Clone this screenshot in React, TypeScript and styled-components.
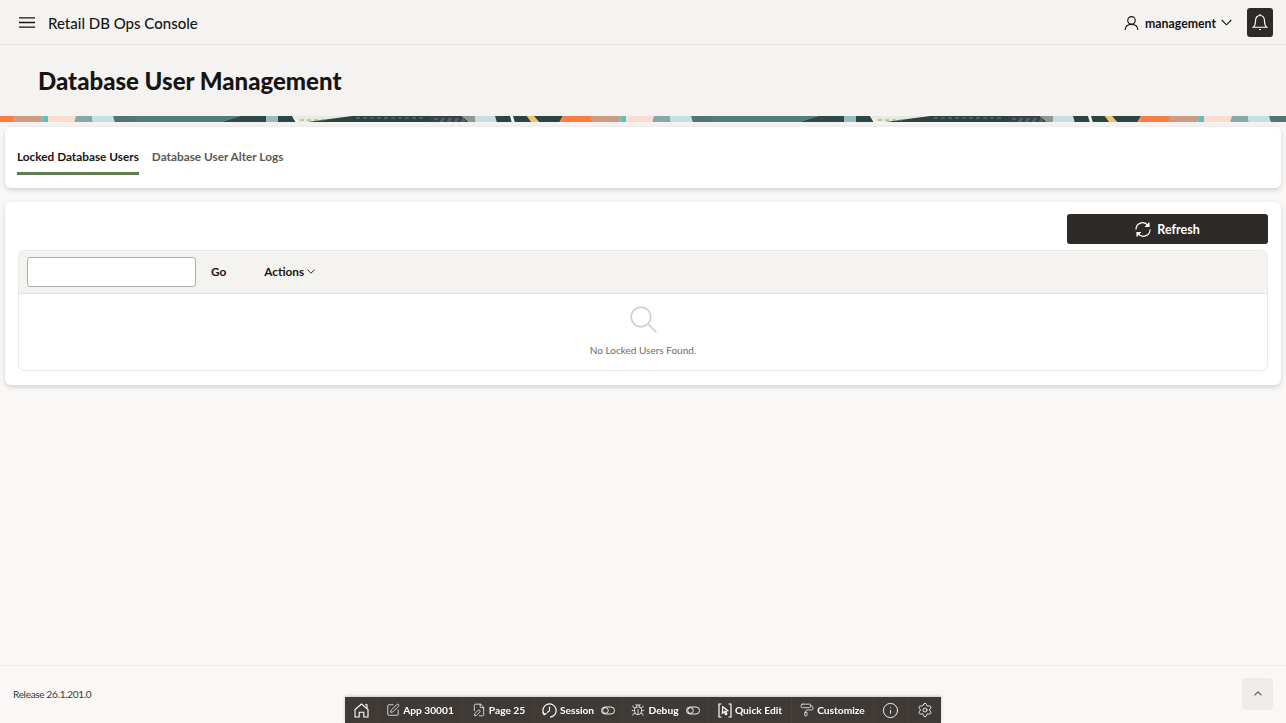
import React from "react";
import styled, { createGlobalStyle } from "styled-components";
import { Bug, FilePen, Info, PaintRoller, Settings, SquarePen } from "lucide-react";

const Global = createGlobalStyle`
  html, body { margin: 0; padding: 0; height: 100%; overflow: hidden; }
  body { background: #f9f8f6; font-family: Lato, "Noto Sans", "Liberation Sans", sans-serif; color: #161513; }
  * { box-sizing: border-box; }
`;

const Page = styled.div`
  height: 723px;
  display: flex;
  flex-direction: column;
`;
const Header = styled.header`
  height: 45px;
  flex: none;
  background: #f5f3f1;
  border-bottom: 1px solid #e6e4e1;
  display: flex;
  align-items: center;
  padding: 1px 13px 0 19px;
`;
const AppName = styled.div`
  font-size: 15px;
  font-weight: 500;
  margin-left: 13px;
  flex: 1;
`;
const UserName = styled.span`
  font-size: 12.3px;
  font-weight: 700;
  margin: 1px 5px 0 6px;
`;
const BellButton = styled.div`
  width: 26px;
  height: 29px;
  background: #2d2a27;
  border-radius: 3px;
  margin-left: 15px;
  display: flex;
  align-items: center;
  justify-content: center;
`;
const Hero = styled.div`
  flex: none;
  background: #f5f3f1;
  height: 71px;
  padding: 1px 0 0 38px;
  display: flex;
  align-items: center;
`;
const Title = styled.h1`
  margin: 0;
  font-size: 24px;
  font-weight: 900;
  line-height: 32px;
`;
const Banner = styled.svg`
  display: block;
  flex: none;
  width: 100%;
  height: 6px;
`;
const BannerGap = styled.div`
  flex: none;
  height: 5px;
  background: #f5f3f1;
`;
const Main = styled.main`
  flex: 1;
  display: flex;
  flex-direction: column;
  gap: 14px;
  padding: 0 5px;
`;
const Card = styled.section`
  background: #fff;
  border-radius: 6px;
  box-shadow: 0 2px 5px rgba(0, 0, 0, 0.16);
`;
const TabBar = styled(Card)`
  height: 61px;
  padding: 0 12px;
  display: flex;
  gap: 13px;
`;
const Tab = styled.div<{ $active?: boolean }>`
  height: 48px;
  padding-top: 21px;
  font-size: 11.8px;
  line-height: 18px;
  font-weight: 700;
  color: ${(p) => (p.$active ? "#161513" : "#5c5854")};
  border-bottom: 3px solid ${(p) => (p.$active ? "#5f7d4f" : "transparent")};
`;
const ReportCard = styled(Card)`
  height: 183px;
  padding: 12px 13px 14px;
`;
const ButtonRow = styled.div`
  display: flex;
  justify-content: flex-end;
  margin-bottom: 6px;
`;
const RefreshButton = styled.div`
  width: 201px;
  height: 30px;
  background: #2d2a27;
  border-radius: 3px;
  color: #fff;
  font-size: 12.5px;
  font-weight: 700;
  display: flex;
  align-items: center;
  justify-content: center;
  gap: 6px;
`;
const Report = styled.div`
  height: 121px;
  border: 1px solid #ebe9e6;
  border-radius: 6px;
  overflow: hidden;
`;
const ReportBar = styled.div`
  height: 43px;
  background: #f5f3f0;
  border: 0 solid #e6e4e1;
  border-bottom-width: 1px;
  display: flex;
  align-items: center;
  padding: 0 8px;
`;
const SearchInput = styled.input`
  width: 169px;
  height: 30px;
  background: #fff;
  border: 1px solid #b2afab;
  border-radius: 3px;
`;
const BarAction = styled.div<{ $gap: number }>`
  font-size: 11.8px;
  font-weight: 700;
  margin: -1px 0 0 ${(p) => p.$gap}px;
  display: flex;
  align-items: center;
  gap: 3px;
`;
const Empty = styled.div`
  display: flex;
  flex-direction: column;
  align-items: center;
  padding-top: 12px;
  gap: 10px;
`;
const EmptyText = styled.div`
  font-size: 10px;
  line-height: 14px;
  color: #6f6b66;
`;
const Footer = styled.footer`
  height: 58px;
  flex: none;
  border-top: 1px solid #eeece9;
  display: flex;
  align-items: center;
  justify-content: space-between;
  padding: 0 13px 2px;
  font-size: 10px;
  letter-spacing: -0.3px;
  color: #3a3733;
`;
const TopButton = styled.div`
  width: 31px;
  height: 32px;
  background: #efedeb;
  border-radius: 4px;
  display: flex;
  align-items: center;
  justify-content: center;
`;
const DevBar = styled.div`
  position: fixed;
  left: 345px;
  bottom: 0;
  width: 596px;
  height: 26px;
  background: #3f3a36;
  display: flex;
  align-items: stretch;
  box-shadow: 0 -1px 3px rgba(0, 0, 0, 0.2);
`;
const DevItem = styled.div<{ $w: number }>`
  width: ${(p) => p.$w}px;
  flex: none;
  color: #fff;
  font-size: 10.2px;
  font-weight: 700;
  display: flex;
  align-items: center;
  justify-content: center;
  gap: 3px;
  border-right: 1px solid #47423e;
  &:last-child { border-right: 0; }
`;

const dev = { size: 14, strokeWidth: 1.3, color: "#fff" };

const Toggle = () => (
  <svg width="14" height="9" viewBox="0 0 14 9" fill="none" stroke="#fff" strokeWidth="0.9" style={{ marginLeft: 4 }}>
    <rect x="0.5" y="1" width="13" height="7" rx="3.5" />
    <circle cx="4.500" cy="4.500" r="2.800" />
  </svg>
);

const segments: [string, string][] = [
  ["#fb7c45", "0,0 15,0 13,7 0,7"],
  ["#cb9c82", "13,0 43,0 41,7 13,7"],
  ["#5cc2bb", "43,0 50,0 48,7 41,7"],
  ["#fddccf", "48,0 76,0 74,7 48,7"],
  ["#86a9a8", "76,0 92,0 93,7 74,7"],
  ["#c3e0e3", "92,0 113,0 115,7 93,7"],
  ["#4f7670", "113,0 135,0 135,7 115,7"],
  ["#4f7f7c", "135,0 240,0 218,7 135,7"],
  ["#2f4a46", "240,0 266,0 266,7 218,7"],
  ["#97bcc0", "266,0 278,0 278,7 266,7"],
  ["#2b4541", "278,0 292,0 296,7 278,7"],
  ["#e3ecd8", "292,0 352,0 344,4 300,7"],
  ["#2d4240", "352,0 430,0 430,7 300,7"],
  ["#33454a", "430,0 462,0 470,7 430,7"],
  ["#8a9a92", "462,0 475,0 475,7 470,7"],
  ["#c5dfe3", "475,0 495,0 497,7 475,7"],
  ["#2c4441", "495,0 510,0 512,7 497,7"],
  ["#2c4441", "513,0 527,0 532,7 515,7"],
  ["#f0c663", "527,0 534,0 540,7 532,7"],
  ["#2c4441", "534,0 563,0 559,7 540,7"],
  ["#fb7c45", "563,0 578,0 578,7 559,7"],
];

export default function App() {
  return (
    <Page>
      <Global />
      <Header>
        <svg width="16" height="11" viewBox="0 0 16 11" stroke="#161513" strokeWidth="1.3">
          <path d="M0 .8h16M0 5.500h16M0 10.200h16" />
        </svg>
        <AppName>Retail DB Ops Console</AppName>
        <svg width="15" height="16" viewBox="0 0 16 16" fill="none" stroke="#161513" strokeWidth="1.2">
          <circle cx="8" cy="5.200" r="4" />
          <path d="M1.200 15.500c.3-3.600 3-6 6.800-6s6.500 2.400 6.800 6" />
        </svg>
        <UserName>management</UserName>
        <svg width="11" height="7" viewBox="0 0 11 7" fill="none" stroke="#161513" strokeWidth="1.100">
          <path d="M.7 1l4.800 4.800L10.300 1" />
        </svg>
        <BellButton>
          <svg width="16" height="17" viewBox="0 0 15 17" fill="none" stroke="#fff" strokeWidth="1.100">
            <path d="M.8 13.200c2-1.600 2.200-3.200 2.200-6.200 0-3.200 1.800-5.500 4.500-5.500S12 3.800 12 7c0 3 .2 4.600 2.200 6.200z" />
            <path d="M7.500 0v1.500M6.500 15.500h2" />
          </svg>
        </BellButton>
      </Header>
      <Hero>
        <Title>Database User Management</Title>
      </Hero>
      <Banner aria-hidden="true">
        <defs>
          <pattern id="band" width="578" height="7" patternUnits="userSpaceOnUse">
            {segments.map(([fill, points]) => (
              <polygon key={points} fill={fill} points={points} />
            ))}
            <path d="M300 4h26M356 2h70M434 3h30M440 5h28" stroke="#7d8d86" strokeWidth="0.8" strokeDasharray="4 3" />
          </pattern>
        </defs>
        <rect width="100%" height="7" fill="url(#band)" />
      </Banner>
      <BannerGap />
      <Main>
        <TabBar>
          <Tab $active>Locked Database Users</Tab>
          <Tab>Database User Alter Logs</Tab>
        </TabBar>
        <ReportCard>
          <ButtonRow>
            <RefreshButton>
              <svg width="16" height="15" viewBox="0 0 16 15" fill="none" stroke="#fff" strokeWidth="1.200">
                <path d="M1 7.500A6.600 6.600 0 0 1 13 3.600" />
                <path d="M15 7.500A6.600 6.600 0 0 1 3 11.400" />
                <path d="M14 .5v4h-4" fill="#fff" />
                <path d="M2 14.500v-4h4" fill="#fff" />
              </svg>
              Refresh
            </RefreshButton>
          </ButtonRow>
          <Report>
            <ReportBar>
              <SearchInput aria-label="Search" />
              <BarAction $gap={15}>Go</BarAction>
              <BarAction $gap={38}>
                Actions
                <svg width="8" height="5" viewBox="0 0 8 5" fill="none" stroke="#161513" strokeWidth="0.9">
                  <path d="M.5.700L4 4.200 7.500.700" />
                </svg>
              </BarAction>
            </ReportBar>
            <Empty>
              <svg width="27" height="27" viewBox="0 0 27 27" fill="none" stroke="#c9ced0" strokeWidth="1.600">
                <circle cx="11" cy="11" r="9.800" />
                <path d="M18 18l8.300 8.300" />
              </svg>
              <EmptyText>No Locked Users Found.</EmptyText>
            </Empty>
          </Report>
        </ReportCard>
      </Main>
      <Footer>
        <span>Release 26.1.201.0</span>
        <TopButton>
          <svg width="8" height="5" viewBox="0 0 8 5" fill="none" stroke="#5c5854" strokeWidth="1.100">
            <path d="M.5 4.300L4 .8l3.500 3.500" />
          </svg>
        </TopButton>
      </Footer>
      <DevBar>
        <DevItem $w={33}>
          <svg width="15" height="15" viewBox="0 0 15 15" fill="none" stroke="#fff" strokeWidth="1.100">
            <path d="M1 14V6.500L7.500 1 14 6.500V14H9.800V9.200H5.200V14z" />
            <path d="M11 1.800h2v3.200" />
          </svg>
        </DevItem>
        <DevItem $w={85}><SquarePen {...dev} />App 30001</DevItem>
        <DevItem $w={72}><FilePen {...dev} />Page 25</DevItem>
        <DevItem $w={88}>
          <svg width="15" height="15" viewBox="0 0 15 15" fill="none" stroke="#fff" strokeWidth="1.200">
            <path d="M2.200 11.400A6.600 6.600 0 1 1 8 14.100" />
            <path d="M.8 9.200l1.400 2.400 2.500-1.300" />
            <path d="M7.500 3.800v3.900l-2.300 1.800" />
          </svg>
          Session<Toggle />
        </DevItem>
        <DevItem $w={86}><Bug {...dev} />Debug<Toggle /></DevItem>
        <DevItem $w={83}>
          <svg width="14" height="15" viewBox="0 0 14 15" fill="none" stroke="#fff" strokeWidth="1.200">
            <path d="M3.500 1H1v13h2.500M10.500 1H13v13h-2.500" />
            <path d="M4.800 3.800l5 3.900-2.400.4 1.500 2.800-1.300.7-1.500-2.800-1.800 1.500z" />
          </svg>
          Quick Edit
        </DevItem>
        <DevItem $w={82}><PaintRoller {...dev} />Customize</DevItem>
        <DevItem $w={34}><Info size={17} strokeWidth={1.300} color="#fff" /></DevItem>
        <DevItem $w={33}><Settings size={16} strokeWidth={1.300} color="#fff" /></DevItem>
      </DevBar>
    </Page>
  );
}
